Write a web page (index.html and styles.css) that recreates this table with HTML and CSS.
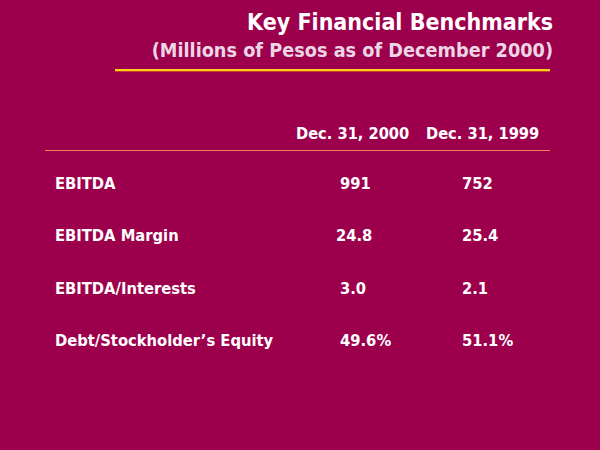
FILE: index.html
```html
<!DOCTYPE html>
<html>
<head>
<meta charset="utf-8">
<link rel="stylesheet" href="styles.css">
</head>
<body>
<div class="slide">
  <div class="header">
    <div class="title">Key Financial Benchmarks</div>
    <div class="subtitle">(Millions of Pesos as of December 2000)</div>
  </div>
  <div class="rule"></div>
  <div class="table">
    <div class="thead">
      <span></span>
      <span>Dec. 31, 2000</span>
      <span>Dec. 31, 1999</span>
    </div>
    <div class="rows">
      <div class="row"><span>EBITDA</span><span>991</span><span>752</span></div>
      <div class="row"><span>EBITDA Margin</span><span class="nudge">24.8</span><span>25.4</span></div>
      <div class="row"><span>EBITDA/Interests</span><span>3.0</span><span>2.1</span></div>
      <div class="row"><span>Debt/Stockholder’s Equity</span><span>49.6%</span><span>51.1%</span></div>
    </div>
  </div>
</div>
</body>
</html>
```

FILE: styles.css
```css
html, body {
  margin: 0;
  padding: 0;
}
body {
  background: #9c004c;
}
.slide {
  width: 600px;
  height: 450px;
  overflow: hidden;
  background: #9c004c;
  color: #ffffff;
  font-family: "DejaVu Sans Condensed", "DejaVu Sans", sans-serif;
  font-weight: bold;
}
.header {
  padding: 8px 47px 0 0;
  text-align: right;
}
.title {
  font-size: 23px;
  line-height: 28px;
}
.subtitle {
  font-size: 19.7px;
  line-height: 30px;
  color: #ecd6e4;
}
.rule {
  margin: 3px 50px 0 115px;
  height: 2px;
  background: #ffd21a;
  border-bottom: 1px solid #c8402a;
}
.table {
  margin: 52px 50px 0 45px;
  font-size: 16.3px;
}
.thead {
  display: grid;
  grid-template-columns: 251px 130px 1fr;
  line-height: 20px;
  padding-bottom: 6px;
  border-bottom: 1px solid #f0845a;
}
.rows {
  padding-top: 23px;
}
.row {
  display: grid;
  grid-template-columns: 285px 122px 1fr;
  padding-left: 10px;
  height: 52.3px;
  line-height: 20px;
  font-size: 16.4px;
}
.nudge {
  margin-left: -4px;
}
```
